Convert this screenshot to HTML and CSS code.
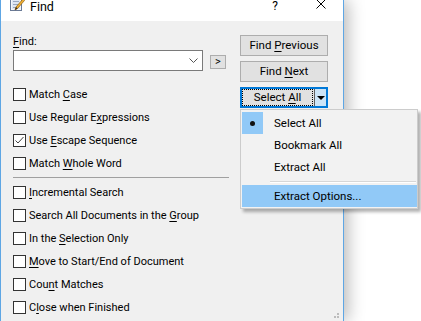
FILE: index.html
```html
<!DOCTYPE html>
<html>
<head>
    <link rel="stylesheet" href="styles.css">
</head>
<body>
    <div class="window">
        <div class="titlebar">
            <svg class="app-icon" width="16" height="16" viewBox="0 0 16 16">
                <rect x="1.5" y="1.5" width="11" height="13" fill="#f4f6fa" stroke="#6a7a96"/>
                <rect x="3" y="3" width="8" height="10" fill="#dfe6f2"/>
                <line x1="4" y1="5.5" x2="10" y2="5.5" stroke="#9aa8c0"/>
                <line x1="4" y1="8.5" x2="10" y2="8.5" stroke="#9aa8c0"/>
                <line x1="4" y1="11.5" x2="8" y2="11.5" stroke="#9aa8c0"/>
                <path d="M6 14 L7 11 L14 3 L15.5 4.5 L8.5 12.5 Z" fill="#f2b233" stroke="#8a5a10" stroke-width="0.7"/>
                <path d="M6 14 L7 11 L8.5 12.5 Z" fill="#3a2a1a"/>
            </svg>
            <span class="title">Find</span>
            <span class="help">?</span>
            <svg class="close" width="10" height="10" viewBox="0 0 10 10">
                <path d="M0.5 0.5 L9.5 9.5 M9.5 0.5 L0.5 9.5" stroke="#000" stroke-width="1"/>
            </svg>
        </div>

        <div class="client">
            <div class="left-col">
                <div class="label"><u>F</u>ind:</div>
                <div class="find-row">
                    <div class="combo">
                        <svg width="9" height="5" viewBox="0 0 9 5">
                            <path d="M0.5 0.5 L4.5 4.5 L8.5 0.5" fill="none" stroke="#555" stroke-width="1"/>
                        </svg>
                    </div>
                    <div class="small-btn">&gt;</div>
                </div>

                <div class="group first">
                    <div class="check"><span class="box"></span><span>Match <u>C</u>ase</span></div>
                    <div class="check"><span class="box"></span><span>Use Regular E<u>x</u>pressions</span></div>
                    <div class="check">
                        <span class="box">
                            <svg width="11" height="11" viewBox="0 0 11 11">
                                <path d="M1.5 5.5 L4 8 L9.5 2" fill="none" stroke="#444" stroke-width="1"/>
                            </svg>
                        </span><span>Use <u>E</u>scape Sequence</span>
                    </div>
                    <div class="check"><span class="box"></span><span>Match <u>W</u>hole Word</span></div>
                </div>

                <div class="sep"></div>

                <div class="group">
                    <div class="check"><span class="box"></span><span><u>I</u>ncremental Search</span></div>
                    <div class="check"><span class="box"></span><span>Search All Documents in the <u>G</u>roup</span></div>
                    <div class="check"><span class="box"></span><span>In the <u>S</u>election Only</span></div>
                    <div class="check"><span class="box"></span><span><u>M</u>ove to Start/End of Document</span></div>
                    <div class="check"><span class="box"></span><span>Cou<u>n</u>t Matches</span></div>
                    <div class="check"><span class="box"></span><span>C<u>l</u>ose when Finished</span></div>
                </div>
            </div>

            <div class="right-col">
                <div class="btn">Find <u>P</u>revious</div>
                <div class="btn">Find <u>N</u>ext</div>
                <div class="split">
                    <div class="split-main"><span class="focus-rect">Select <u>A</u>ll</span></div>
                    <div class="split-arrow"><span class="tri"></span></div>
                </div>
            </div>

            <div class="menu">
                <div class="menu-item">
                    <span class="mark checked"><span class="dot"></span></span>
                    <span class="menu-text">Select All</span>
                </div>
                <div class="menu-item">
                    <span class="mark"></span>
                    <span class="menu-text">Bookmark All</span>
                </div>
                <div class="menu-item">
                    <span class="mark"></span>
                    <span class="menu-text">Extract All</span>
                </div>
                <div class="menu-sep"></div>
                <div class="menu-item hot">
                    <span class="mark"></span>
                    <span class="menu-text">Extract Options...</span>
                </div>
            </div>

            <svg class="grip" width="8" height="8" viewBox="0 0 8 8">
                <rect x="5" y="0" width="2" height="2" fill="#bcbcbc"/>
                <rect x="2" y="3" width="2" height="2" fill="#bcbcbc"/>
                <rect x="5" y="3" width="2" height="2" fill="#bcbcbc"/>
            </svg>
        </div>
    </div>
</body>
</html>
```

FILE: styles.css
```css
body {
    margin: 0;
    background: #fff;
    font-family: Roboto, "Liberation Sans", sans-serif;
    font-size: 11.5px;
    color: #000;
    height: 321px;
    overflow: hidden;
}
u {
    text-decoration-thickness: 1px;
    text-underline-offset: 2px;
}
.window {
    width: 342px;
    height: 321px;
    border-left: 1px solid #5ea6e4;
    border-right: 1px solid #5ea6e4;
    background: #f0f0f0;
    box-shadow: 4px 0 16px rgba(0,0,0,0.28);
    display: flex;
    flex-direction: column;
}
.titlebar {
    height: 21px;
    background: #fff;
    display: flex;
    align-items: flex-start;
    overflow: hidden;
}
.app-icon {
    margin: -4px 0 0 8px;
    flex: none;
}
.title {
    font-size: 12.5px;
    line-height: 13px;
    margin: 0 0 0 5px;
}
.help {
    font-size: 12px;
    line-height: 12px;
    margin: 0 0 0 auto;
}
.close {
    margin: -1px 17px 0 38px;
    flex: none;
}
.client {
    position: relative;
    flex: 1;
    display: flex;
    gap: 11px;
    padding: 14px 0 0 12px;
}
.left-col {
    width: 216px;
    font-size: 11px;
}
.label {
    line-height: 14px;
    margin-bottom: 1px;
}
.find-row {
    display: flex;
    align-items: flex-end;
    gap: 7px;
}
.combo {
    box-sizing: border-box;
    width: 190px;
    height: 21px;
    background: #fff;
    border: 1px solid #7a7a7a;
    display: flex;
    align-items: center;
    justify-content: flex-end;
    padding-right: 4px;
}
.small-btn {
    box-sizing: border-box;
    width: 16px;
    height: 14px;
    margin-bottom: 2px;
    background: #e1e1e1;
    border: 1px solid #adadad;
    text-align: center;
    line-height: 11px;
    font-size: 11px;
}
.group.first {
    margin-top: 12px;
}
.check {
    height: 23px;
    display: flex;
    align-items: center;
    white-space: nowrap;
}
.check span:last-child {
    margin-top: -1px;
}
.box {
    box-sizing: border-box;
    width: 13px;
    height: 13px;
    border: 1px solid #333;
    background: #fff;
    margin-right: 3px;
    flex: none;
    display: flex;
}
.sep {
    height: 1px;
    background: #a0a0a0;
    margin: 2px 0 3px;
}
.right-col {
    width: 88px;
    display: flex;
    flex-direction: column;
    gap: 5px;
}
.btn {
    box-sizing: border-box;
    height: 21px;
    background: #e1e1e1;
    border: 1px solid #adadad;
    text-align: center;
    line-height: 18px;
}
.split {
    box-sizing: border-box;
    height: 21px;
    border: 2px solid #0078d7;
    background: #e1e1e1;
    display: flex;
}
.split-main {
    flex: 1;
    display: flex;
}
.focus-rect {
    flex: 1;
    border: 1px dotted #000;
    text-align: center;
    line-height: 14px;
    margin-right: 1px;
}
.split-arrow {
    width: 11px;
    border-left: 1px solid #606060;
    background: #cce4f7;
    display: flex;
    align-items: center;
    justify-content: center;
}
.tri {
    width: 0;
    height: 0;
    border-left: 4px solid transparent;
    border-right: 4px solid transparent;
    border-top: 4px solid #000;
}
.menu {
    position: absolute;
    left: 239px;
    top: 88px;
    width: 175px;
    background: #f2f2f2;
    border: 1px solid #cccccc;
    padding: 2px 0 1px 1px;
    box-shadow: 3px 3px 3px rgba(0,0,0,0.3);
}
.menu-item {
    height: 22px;
    display: flex;
    align-items: center;
    white-space: nowrap;
}
.menu-item.hot {
    background: #91c9f7;
}
.mark {
    width: 21px;
    height: 22px;
    display: flex;
    align-items: center;
    justify-content: center;
    flex: none;
}
.mark.checked {
    background: #91c9f7;
}
.dot {
    width: 5px;
    height: 5px;
    border-radius: 50%;
    background: #111;
}
.menu-text {
    margin-left: 11px;
}
.menu-sep {
    height: 1px;
    background: #d7d7d7;
    border-bottom: 1px solid #fff;
    margin: 3px 1px 2px 28px;
}
.grip {
    position: absolute;
    right: 3px;
    bottom: 0;
}
```
